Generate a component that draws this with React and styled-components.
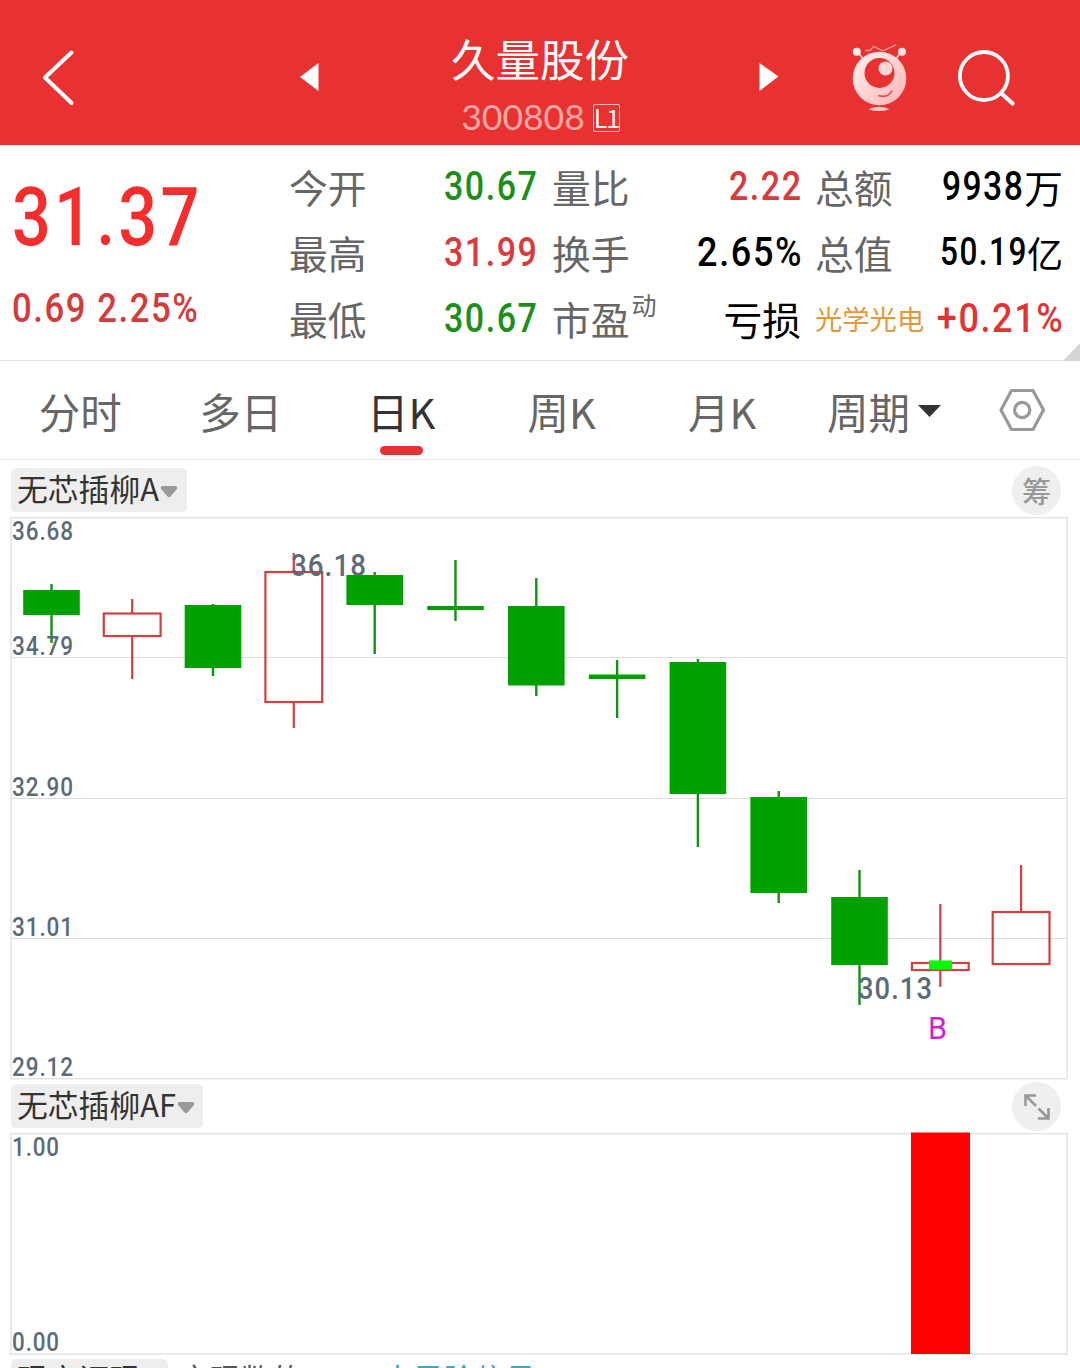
import React from "react";
import styled, { createGlobalStyle } from "styled-components";

const cjk = `"Noto Sans CJK SC", sans-serif`;
const digits = `Roboto, "Noto Sans CJK SC", sans-serif`;

const GlobalStyle = createGlobalStyle`
  * { box-sizing: border-box; }
  body { margin: 0; background: #fff; font-family: ${cjk}; overflow: hidden; }
`;

const Screen = styled.div`
  width: 1080px;
  height: 1368px;
  display: flex;
  flex-direction: column;
  overflow: hidden;
  background: #fff;
`;

const Header = styled.header`
  height: 145px;
  flex: none;
  display: grid;
  grid-template-columns: 290px 500px 290px;
  background: #e83131;
  color: #fff;
`;

const HeaderSide = styled.div`
  display: flex;
  align-items: flex-start;
  padding: ${(p) => p.$pad};
  gap: ${(p) => p.$gap || 0}px;
`;

const Stock = styled.div`
  display: grid;
  grid-template-columns: 40px 1fr 40px;
`;

const Arrow = styled.svg`
  display: block;
  width: 22px;
  height: 30px;
  margin: 62px 0 0 ${(p) => p.$left}px;
`;

const Names = styled.div`
  display: flex;
  flex-direction: column;
  align-items: center;
`;

const StockName = styled.div`
  margin-top: 30px;
  height: 56px;
  line-height: 56px;
  font-size: 44.5px;
  white-space: nowrap;
`;

const CodeRow = styled.div`
  display: flex;
  align-items: center;
  gap: 8px;
  height: 34px;
  margin-top: 15px;
  padding-left: 1px;
`;

const Code = styled.span`
  font: 400 35.5px/32px Lato, sans-serif;
  height: 34px;
  color: #ffa9a6;
`;

const Level = styled.span`
  width: 27px;
  height: 28px;
  margin-top: -1px;
  border: 1px solid #ffc4c2;
  border-radius: 2px;
  font: 400 25px/25px "Noto Sans CJK SC", sans-serif;
  letter-spacing: -1.2px;
  text-align: center;
`;

const Quote = styled.section`
  height: 216px;
  flex: none;
  display: grid;
  grid-template-columns: 289px 263px 263px 249px;
  position: relative;
  border-bottom: 1px solid #e6e6e6;
`;

const Corner = styled.svg`
  position: absolute;
  right: 0;
  bottom: -1px;
  width: 17px;
  height: 18px;
`;

const Num = styled.span`
  display: inline-block;
  font-family: ${digits};
  font-weight: 500;
  letter-spacing: ${(p) => p.$ls ?? 1.8}px;
  margin-right: ${(p) => -(p.$ls ?? 1.8)}px;
  margin-left: ${(p) => (p.$origin === "right" ? -30 : 0)}px;
  transform: scaleX(${(p) => p.$sx || 0.84});
  transform-origin: ${(p) => p.$origin || "left"} center;
  white-space: pre;
`;

const PriceCol = styled.div`
  display: flex;
  flex-direction: column;
  padding-left: 12px;
`;

const Price = styled.div`
  margin-top: 17px;
  height: 96px;
  font-size: 82px;
  line-height: 96px;
  color: #f52d2d;
`;

const Change = styled.div`
  margin-top: 27px;
  height: 48px;
  display: flex;
  font-size: 40px;
  line-height: 48px;
  color: #d43b3b;
`;

const Column = styled.div`
  display: grid;
  grid-template-rows: repeat(3, 66px);
  padding-top: 10px;
`;

const Cell = styled.div`
  display: flex;
  justify-content: space-between;
  height: 66px;
  line-height: 62px;
  padding-right: ${(p) => p.$pr}px;
  white-space: nowrap;
`;

const Label = styled.span`
  font-size: 38.8px;
  color: #666;
`;

const Sup = styled.sup`
  font-size: 25px;
  line-height: 0;
  vertical-align: 20px;
  margin-left: 2px;
`;

const Industry = styled.span`
  font-size: 27.3px;
  color: #e2983c;
`;

const Value = styled.span`
  display: flex;
  gap: ${(p) => p.$gap || 0}px;
  font-size: ${(p) => p.$size || 40.5}px;
  line-height: 62px;
  color: ${(p) => p.$color || "#000"};
`;

const Unit = styled.span`
  font-size: ${(p) => p.$size || 38.8}px;
  line-height: ${(p) => p.$lh || 62}px;
`;

const Tabs = styled.nav`
  height: 99px;
  flex: none;
  display: grid;
  grid-template-columns: repeat(5, 160.5px) 163px 1fr;
  border-bottom: 1px solid #e9e9e9;
`;

const Tab = styled.div`
  display: flex;
  flex-direction: column;
  align-items: center;
  font-size: 41.5px;
  line-height: 60px;
  padding-top: 20px;
  color: ${(p) => (p.$active ? "#333" : "#666")};
  &::after {
    content: "";
    width: 43px;
    height: 9px;
    margin-top: 4.5px;
    border-radius: 5px;
    background: ${(p) => (p.$active ? "#e23232" : "transparent")};
  }
`;

const TabLine = styled.span`
  display: flex;
  align-items: center;
  gap: 8px;
`;

const Gear = styled.svg`
  width: 50px;
  height: 50px;
  margin: 24px 0 0 31px;
`;

const Bar = styled.div`
  height: ${(p) => p.$h}px;
  flex: none;
  display: flex;
  justify-content: space-between;
  align-items: flex-start;
  padding: ${(p) => p.$top}px 19px 0 11px;
`;

const Pill = styled.div`
  display: flex;
  align-items: center;
  gap: 1px;
  width: ${(p) => p.$w}px;
  height: 44px;
  padding-left: 6px;
  padding-bottom: 4px;
  border-radius: 5px;
  background: #eee;
  color: #333;
  font-size: 30.8px;
  line-height: 40px;
  white-space: nowrap;
`;

const Round = styled.div`
  width: 49px;
  height: 49px;
  margin-top: -2px;
  border-radius: 50%;
  display: flex;
  align-items: center;
  justify-content: center;
  background: #efefef;
  color: #999;
  font-size: 29px;
  font-weight: 500;
  line-height: 49px;
`;

const Plot = styled.svg`
  display: block;
  flex: none;
  width: 1080px;
  height: ${(p) => p.$h}px;
  overflow: visible;
  font-family: ${digits};
`;

const Footer = styled.div`
  flex: 1;
  display: flex;
  padding: 4px 11px 0;
  overflow: hidden;
  white-space: nowrap;
`;

const FootPill = styled.div`
  width: 157px;
  height: 44px;
  padding-left: 6px;
  flex: none;
  border-radius: 5px 5px 0 0;
  background: #eee;
  color: #333;
  font-size: 30.8px;
  line-height: 38px;
`;

const FootText = styled.div`
  width: ${(p) => p.$w}px;
  margin-left: ${(p) => p.$ml}px;
  flex: none;
  font-size: 30.8px;
  line-height: 38px;
  color: ${(p) => p.$color};
`;

const GREEN = "#1c8e1c";
const RED = "#d93a3a";

const columns = [
  {
    pr: 15,
    rows: [
      { label: "今开", value: "30.67", color: GREEN },
      { label: "最高", value: "31.99", color: RED },
      { label: "最低", value: "30.67", color: GREEN },
    ],
  },
  {
    pr: 14,
    rows: [
      { label: "量比", value: "2.22", color: RED },
      { label: "换手", value: "2.65%", sx: 0.89 },
      { label: "市盈", sup: "动", unit: "亏损" },
    ],
  },
  {
    pr: 1,
    rows: [
      { label: "总额", value: "9938", unit: "万", sx: 0.83, gap: 2 },
      { label: "总值", value: "50.19", unit: "亿", size: 38, sx: 0.83, unitSize: 36, gap: 1 },
      { industry: "光学光电", value: "+0.21%", color: "#e03434", sx: 0.89 },
    ],
  },
];

const candles = [
  { x: 51.5, hi: 584, top: 590, bot: 615, lo: 643 },
  { x: 132.2, hi: 599, top: 613.5, bot: 636, lo: 679, up: true },
  { x: 213, hi: 604, top: 605, bot: 668, lo: 676 },
  { x: 293.8, hi: 553, top: 572, bot: 702, lo: 728, up: true },
  { x: 374.7, hi: 572, top: 575, bot: 605, lo: 654 },
  { x: 455.5, hi: 560, top: 606, bot: 610, lo: 621 },
  { x: 536.3, hi: 578, top: 606, bot: 685.5, lo: 696 },
  { x: 617.1, hi: 660, top: 674.5, bot: 679, lo: 718 },
  { x: 697.9, hi: 659, top: 662, bot: 794, lo: 847 },
  { x: 778.7, hi: 791, top: 797, bot: 893, lo: 903 },
  { x: 859.5, hi: 870, top: 897, bot: 965, lo: 1005 },
  { x: 940.3, hi: 904, top: 963, bot: 970, lo: 987, up: true },
  { x: 1021.1, hi: 865, top: 912, bot: 964, lo: 964, up: true },
];

const Candle = ({ x, hi, top, bot, lo, up }) =>
  up ? (
    <g stroke="#d04040" strokeWidth="2.2" fill="none">
      <path d={`M${x} ${hi}V${top}M${x} ${bot}V${lo}`} />
      <rect x={x - 28.4} y={top} width="56.8" height={bot - top} />
    </g>
  ) : (
    <g fill="#00a000">
      <path d={`M${x} ${hi}V${lo}`} stroke="#129012" strokeWidth="2.4" />
      <rect x={x - 28.3} y={top} width="56.6" height={bot - top} />
    </g>
  );

const AxisLabel = ({ y, w = 62, children }) => (
  <text x="12" y={y} fontSize="25" fontWeight="500" fill="#5b6b77" letterSpacing="1" textLength={w} lengthAdjust="spacingAndGlyphs">
    {children}
  </text>
);

const DropMark = () => (
  <svg width="18" height="12" viewBox="0 0 18 12" style={{ marginTop: 8 }}>
    <path d="M2 0H16Q18 1 17 3L10.5 10.5Q9 12 7.5 10.5L1 3Q0 1 2 0Z" fill="#999" />
  </svg>
);

const Mascot = () => (
  <svg width="60" height="70" viewBox="850 42 60 70">
    <defs>
      <linearGradient id="ball" x1="0" y1="0" x2="1" y2="1">
        <stop offset="0" stopColor="#fff3f2" />
        <stop offset="1" stopColor="#ffb3b2" />
      </linearGradient>
    </defs>
    <path d="M857 51L864 60M902 51L895 60" stroke="#ffd5d3" strokeWidth="1.6" />
    <circle cx="856.8" cy="51.8" r="4" fill="#fff0ef" />
    <circle cx="902" cy="51.8" r="4" fill="#ffe2e1" />
    <path d="M865.5 50.5H870L873.5 46.5L883 50.8L896 44.8" fill="none" stroke="#f9a09d" strokeWidth="1.3" />
    <circle cx="879.5" cy="78.5" r="26.8" fill="url(#ball)" />
    <circle cx="879.5" cy="73" r="15" fill="#e83131" />
    <circle cx="885.5" cy="68.5" r="7" fill="#ffd4d3" />
    <path d="M878.5 95.5Q888 98.5 892 90.5" fill="none" stroke="#d94a4a" strokeWidth="1.6" />
    <path d="M868.5 109.2Q879 104.5 889.5 109.2Q879 113 868.5 109.2Z" fill="#ffc4c3" />
  </svg>
);

export default function App() {
  return (
    <Screen>
      <GlobalStyle />
      <Header>
        <HeaderSide $pad="49px 0 0 40px">
          <svg width="38" height="58" viewBox="0 0 38 58">
            <path d="M31.5 3.5L5 28.5L31.5 54" fill="none" stroke="#fff" strokeWidth="4" strokeLinecap="round" strokeLinejoin="round" />
          </svg>
        </HeaderSide>
        <Stock>
          <Arrow $left={9} viewBox="0 0 22 30">
            <path d="M1 15L19.5 1V29Z" fill="#fff" />
          </Arrow>
          <Names>
            <StockName>久量股份</StockName>
            <CodeRow>
              <Code>300808</Code>
              <Level>L1</Level>
            </CodeRow>
          </Names>
          <Arrow $left={8} viewBox="0 0 22 30">
            <path d="M20.5 14.5L1.5 1V29Z" fill="#fff" />
          </Arrow>
        </Stock>
        <HeaderSide $pad="42px 0 0 60px" $gap={46}>
          <Mascot />
          <svg width="62" height="68" viewBox="956 42 62 68">
            <circle cx="983.9" cy="76" r="24" fill="none" stroke="#fff" strokeWidth="3.8" />
            <path d="M1001 93L1012.5 103.5" stroke="#fff" strokeWidth="4.2" strokeLinecap="round" />
          </svg>
        </HeaderSide>
      </Header>

      <Quote>
        <PriceCol>
          <Price><Num $ls={3.8} $sx={0.835}>31.37</Num></Price>
          <Change><Num $sx={0.867}>{"0.69 2.25%"}</Num></Change>
        </PriceCol>
        {columns.map((c, i) => (
          <Column key={i}>
            {c.rows.map((r, j) => (
              <Cell key={j} $pr={c.pr}>
                {r.industry ? (
                  <Industry>{r.industry}</Industry>
                ) : (
                  <Label>
                    {r.label}
                    {r.sup && <Sup>{r.sup}</Sup>}
                  </Label>
                )}
                <Value $color={r.color} $size={r.size} $gap={r.gap}>
                  {r.value && <Num $origin="right" $sx={r.sx}>{r.value}</Num>}
                  {r.unit && <Unit $size={r.unitSize}>{r.unit}</Unit>}
                </Value>
              </Cell>
            ))}
          </Column>
        ))}
        <Corner viewBox="0 0 17 18">
          <path d="M17 0V18H0Z" fill="#d6d6d6" />
        </Corner>
      </Quote>

      <Tabs>
        {["分时", "多日", "日K", "周K", "月K"].map((t) => (
          <Tab key={t} $active={t === "日K"}>{t}</Tab>
        ))}
        <Tab>
          <TabLine>
            周期
            <svg width="23" height="12" viewBox="0 0 23 12">
              <path d="M0 0H23L11.5 12Z" fill="#333" />
            </svg>
          </TabLine>
        </Tab>
        <Gear viewBox="0 0 50 50">
          <path d="M14.5 5.5H36L46.5 25L36 44.5H14.5L4 25Z" fill="none" stroke="#999" strokeWidth="3.2" strokeLinejoin="round" />
          <circle cx="25.2" cy="25" r="7.6" fill="none" stroke="#999" strokeWidth="3.2" />
        </Gear>
      </Tabs>

      <Bar $h={57} $top={8}>
        <Pill $w={176}>无芯插柳A<DropMark /></Pill>
        <Round>筹</Round>
      </Bar>

      <Plot $h={562} viewBox="0 517 1080 562">
        <path d="M11 657.5H1067M11 798.5H1067M11 938.5H1067" stroke="#dcdcdc" strokeWidth="1" />
        <rect x="11" y="517.7" width="1056" height="561" fill="none" stroke="#e3e3e3" strokeWidth="1.5" />
        {candles.map((c) => <Candle key={c.x} {...c} />)}
        <rect x="929" y="960.5" width="23" height="9" fill="#00ff00" />
        <AxisLabel y={540}>36.68</AxisLabel>
        <AxisLabel y={655}>34.79</AxisLabel>
        <AxisLabel y={796}>32.90</AxisLabel>
        <AxisLabel y={936}>31.01</AxisLabel>
        <AxisLabel y={1076}>29.12</AxisLabel>
        <g fontSize="30.5" fontWeight="500" fill="#5b6b77" letterSpacing="1.2">
          <text x="291" y="576" textLength="76" lengthAdjust="spacingAndGlyphs">36.18</text>
          <text x="858" y="999" textLength="75" lengthAdjust="spacingAndGlyphs">30.13</text>
        </g>
        <text x="928" y="1039" fontSize="31" fill="#d21ed2" textLength="19" lengthAdjust="spacingAndGlyphs">B</text>
      </Plot>

      <Bar $h={54} $top={5}>
        <Pill $w={192}>无芯插柳AF<DropMark /></Pill>
        <Round>
          <svg width="28" height="28" viewBox="0 0 28 28" fill="none" stroke="#999" strokeWidth="2.6">
            <path d="M2.5 13V2.5H13M3 3L13 13M15.5 15.5L25.5 25.5M25.5 15V25.5H15" />
          </svg>
        </Round>
      </Bar>

      <Plot $h={222} viewBox="0 1133 1080 222">
        <rect x="11" y="1133.7" width="1056" height="220.3" fill="none" stroke="#e3e3e3" strokeWidth="1.5" />
        <rect x="911" y="1132.5" width="59" height="221.5" fill="#f00" />
        <AxisLabel y={1156} w={48}>1.00</AxisLabel>
        <AxisLabel y={1351} w={48}>0.00</AxisLabel>
      </Plot>

      <Footer>
        <FootPill>现实证现</FootPill>
        <FootText $w={123} $ml={11} $color="#555">变现数的</FootText>
        <FootText $w={160} $ml={80} $color="#3aa9b8">大风险信号</FootText>
      </Footer>
    </Screen>
  );
}
